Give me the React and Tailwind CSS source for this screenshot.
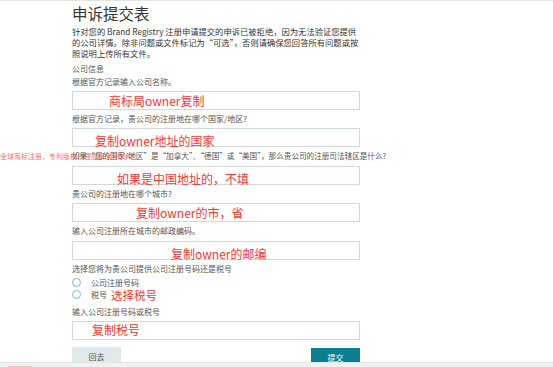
export default function App() {
  const font = { fontFamily: '"Noto Sans CJK SC", "Noto Sans", sans-serif' };

  const Label = ({ children, className = "" }) => (
    <div className={"relative leading-[10px] text-[#555] mt-[4px] mb-[4.5px] whitespace-nowrap " + (className || "text-[8px]")}>{children}</div>
  );

  const Box = ({ children }) => (
    <div className="relative h-[19px] w-[288px] border border-[#d3d8d8] bg-white">{children}</div>
  );

  const red = "absolute whitespace-nowrap text-[12px] leading-[14px] text-[#fb3434]";

  return (
    <div className="w-[553px] h-[367px] overflow-hidden bg-white flex flex-col" style={font}>
      <div className="h-[362px] overflow-hidden border-t border-[#e4e4e4] pl-[72px] pt-[1.5px]">
        <h1 className="text-[15.5px] leading-[20px] text-[#2f3636] font-normal">申诉提交表</h1>
        <p className="mt-[3.5px] text-[8.3px] leading-[10.8px] text-[#333] whitespace-nowrap">
          针对您的 Brand Registry 注册申请提交的申诉已被拒绝，因为无法验证您提供
          <br />
          的公司详情。除非问题或文件标记为“可选”，否则请确保您回答所有问题或按
          <br />
          照说明上传所有文件。
        </p>
        <div className="mt-[5.5px] text-[8px] leading-[10px] text-[#555]">公司信息</div>
        <div className="mt-[3px] mb-[4px] text-[8px] leading-[10px] text-[#555]">根据官方记录输入公司名称。</div>
        <Box>
          <span className={red + " left-[36px] top-[2px]"}>商标局owner复制</span>
        </Box>

        <Label>根据官方记录，贵公司的注册地在哪个国家/地区?</Label>
        <Box>
          <span className={red + " left-[22px] top-[5px]"}>复制owner地址的国家</span>
        </Box>

        <Label className="text-[7.6px]">
          <span className="absolute left-[-72px] top-0 whitespace-nowrap text-[7px] leading-[10px] text-[#ff4a4a] opacity-80">
            全球商标注册，专利版权代理加拿大MONO
          </span>
          如果“您的国家/地区”是“加拿大”、“德国”或“美国”，那么贵公司的注册司法辖区是什么?
        </Label>
        <Box>
          <span className={red + " left-[44px] top-[5px]"}>如果是中国地址的，不填</span>
        </Box>

        <Label>贵公司的注册地在哪个城市?</Label>
        <Box>
          <span className={red + " left-[63px] top-[2px]"}>复制owner的市，省</span>
        </Box>

        <Label>输入公司注册所在城市的邮政编码。</Label>
        <Box>
          <span className={red + " left-[98px] top-[5px]"}>复制owner的邮编</span>
        </Box>

        <div className="mt-[4px] text-[8px] leading-[10px] text-[#555]">选择您将为贵公司提供公司注册号码还是税号</div>
        <div className="mt-[3px] flex flex-col">
          <label className="flex items-center h-[12px]">
            <span className="w-[9px] h-[9px] rounded-full border border-[#7cb8c2]" />
            <span className="ml-[10px] text-[8px] text-[#555]">公司注册号码</span>
          </label>
          <label className="flex items-center h-[12px]">
            <span className="w-[9px] h-[9px] rounded-full border border-[#7cb8c2]" />
            <span className="ml-[10px] text-[8px] text-[#555]">税号</span>
            <span className="ml-[4px] text-[11.5px] leading-[12px] text-[#fb3434]">选择税号</span>
          </label>
        </div>

        <div className="mt-[6px] mb-[4px] text-[8px] leading-[10px] text-[#555]">输入公司注册号码或税号</div>
        <Box>
          <span className={red + " left-[19px] top-[1px]"}>复制税号</span>
        </Box>

        <div className="mt-[7px] w-[288px] flex justify-between items-start">
          <button className="w-[49px] h-[20px] bg-[#e2e9ea] text-[8px] text-[#555]">回去</button>
          <button className="mt-[1px] w-[49px] h-[20px] bg-[#0c7f8e] text-[8px] text-white">提交</button>
        </div>
      </div>
      <div className="h-[5px] bg-[#f1f1f1] border-t border-[#e6e6e6] flex items-end">
        <div className="ml-[8px] w-[24px] h-[1px] bg-[#f3c4c4]" />
      </div>
    </div>
  );
}
